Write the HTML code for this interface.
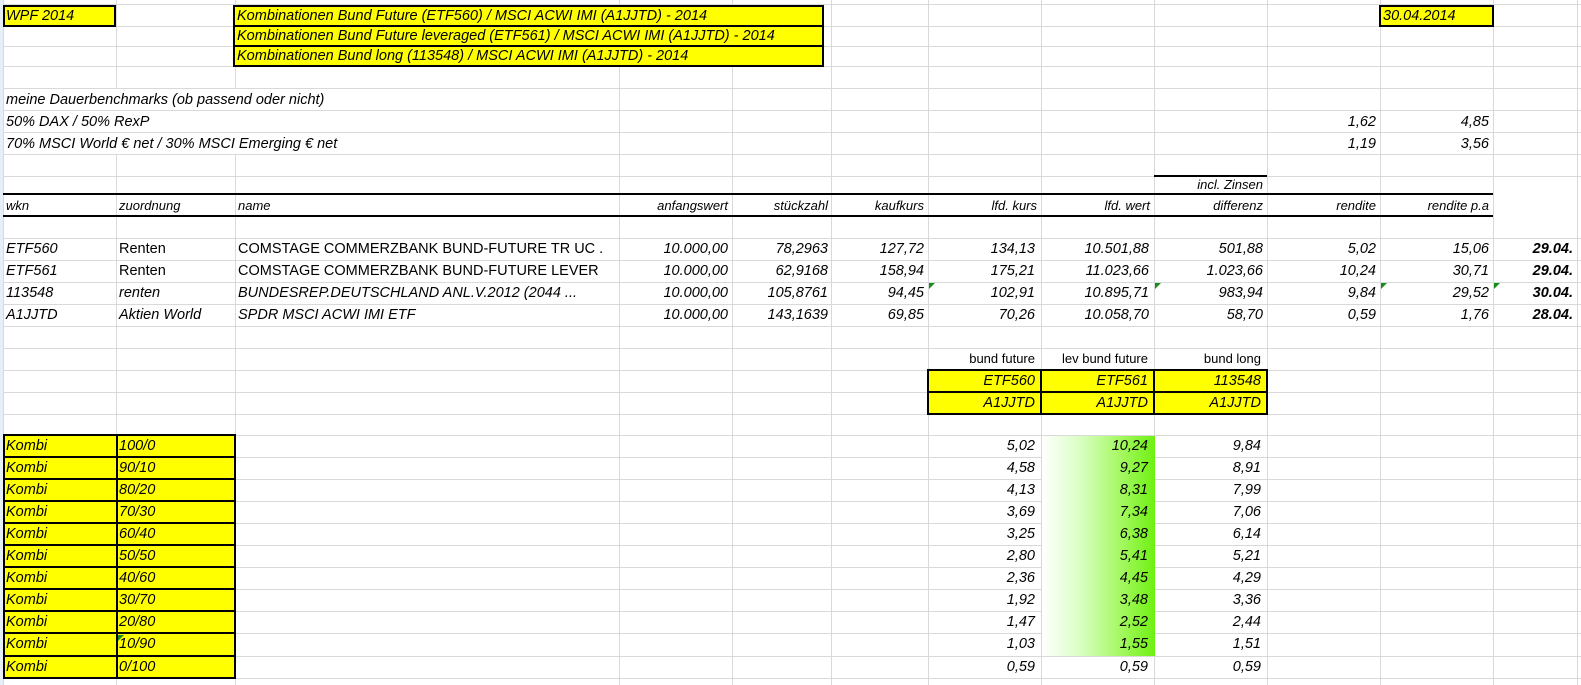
<!DOCTYPE html>
<html><head><meta charset="utf-8"><style>
body{margin:0;width:1581px;height:685px;background:#fff;position:relative;overflow:hidden;font-family:"Liberation Sans",Arial,sans-serif;}
.v{position:absolute;top:0;height:685px;width:1px;background:#d9d9d9}
.h{position:absolute;left:0;width:1581px;height:1px;background:#d9d9d9}
.t{position:absolute;font-size:14.5px;font-style:italic;white-space:nowrap;color:#000;line-height:22px;}
.r{text-align:right}
.y{position:absolute;background:#ffff00;border:2px solid #000;box-sizing:border-box;}
.k{position:absolute;height:2px;background:#000}
.s{font-size:13px}
.n{font-style:normal}
.b{font-weight:bold}
.tri{position:absolute;width:0;height:0;border-top:6px solid #1a8c1a;border-right:6px solid transparent}
</style></head><body>
<div class="h" style="top:4px"></div><div class="h" style="top:26px"></div><div class="h" style="top:46px"></div><div class="h" style="top:66px"></div><div class="h" style="top:88px"></div><div class="h" style="top:110px"></div><div class="h" style="top:132px"></div><div class="h" style="top:154px"></div><div class="h" style="top:176px"></div><div class="h" style="top:238px"></div><div class="h" style="top:260px"></div><div class="h" style="top:282px"></div><div class="h" style="top:304px"></div><div class="h" style="top:326px"></div><div class="h" style="top:348px"></div><div class="h" style="top:370px"></div><div class="h" style="top:392px"></div><div class="h" style="top:414px"></div><div class="h" style="top:435px"></div><div class="h" style="top:457px"></div><div class="h" style="top:479px"></div><div class="h" style="top:501px"></div><div class="h" style="top:523px"></div><div class="h" style="top:545px"></div><div class="h" style="top:567px"></div><div class="h" style="top:589px"></div><div class="h" style="top:611px"></div><div class="h" style="top:633px"></div><div class="h" style="top:656px"></div><div class="h" style="top:678px"></div>
<div class="v" style="left:3px"></div><div class="v" style="left:116px"></div><div class="v" style="left:235px"></div><div class="v" style="left:619px"></div><div class="v" style="left:732px"></div><div class="v" style="left:831px"></div><div class="v" style="left:928px"></div><div class="v" style="left:1041px"></div><div class="v" style="left:1154px"></div><div class="v" style="left:1267px"></div><div class="v" style="left:1380px"></div><div class="v" style="left:1493px"></div><div class="v" style="left:1577px"></div>
<div style="position:absolute;left:0;top:0;width:3px;height:685px;background:#e6eef8"></div>
<div style="position:absolute;left:4px;top:89px;width:614px;height:21px;background:#fff"></div>
<div style="position:absolute;left:4px;top:111px;width:614px;height:21px;background:#fff"></div>
<div style="position:absolute;left:4px;top:133px;width:614px;height:21px;background:#fff"></div>
<div style="position:absolute;left:1042px;top:436px;width:113px;height:220px;background:linear-gradient(to right,#fff 0%,#d8ffc0 35%,#a4f860 70%,#6ef012 100%)"></div>
<div class="k" style="left:1154px;top:175px;width:113px"></div>
<div class="k" style="left:3px;top:193px;width:1490px"></div>
<div class="k" style="left:3px;top:215px;width:1490px"></div>
<div class="y" style="left:3px;top:5px;width:113px;height:22px"></div>
<div class="y" style="left:233px;top:5px;width:591px;height:22px"></div>
<div class="y" style="left:233px;top:25px;width:591px;height:22px"></div>
<div class="y" style="left:233px;top:45px;width:591px;height:22px"></div>
<div class="y" style="left:1379px;top:5px;width:115px;height:22px"></div>
<div class="y" style="left:927px;top:369px;width:115px;height:24px"></div>
<div class="y" style="left:1040px;top:369px;width:115px;height:24px"></div>
<div class="y" style="left:1153px;top:369px;width:115px;height:24px"></div>
<div class="y" style="left:927px;top:391px;width:115px;height:24px"></div>
<div class="y" style="left:1040px;top:391px;width:115px;height:24px"></div>
<div class="y" style="left:1153px;top:391px;width:115px;height:24px"></div>
<div id="kb"></div>
<div class="t" style="left:6px;top:5px">WPF 2014</div>
<div class="t" style="left:237px;top:5px">Kombinationen Bund Future (ETF560) / MSCI ACWI IMI (A1JJTD) - 2014</div>
<div class="t" style="left:237px;top:25px">Kombinationen Bund Future leveraged (ETF561) / MSCI ACWI IMI (A1JJTD) - 2014</div>
<div class="t" style="left:237px;top:45px">Kombinationen Bund long (113548) / MSCI ACWI IMI (A1JJTD) - 2014</div>
<div class="t" style="left:1383px;top:5px">30.04.2014</div>
<div class="t" style="left:6px;top:89px">meine Dauerbenchmarks (ob passend oder nicht)</div>
<div class="t" style="left:6px;top:111px">50% DAX / 50% RexP</div>
<div class="t" style="left:6px;top:133px">70% MSCI World € net / 30% MSCI Emerging € net</div>
<div class="t r" style="left:1267px;width:109px;top:111px">1,62</div>
<div class="t r" style="left:1380px;width:109px;top:111px">4,85</div>
<div class="t r" style="left:1267px;width:109px;top:133px">1,19</div>
<div class="t r" style="left:1380px;width:109px;top:133px">3,56</div>
<div class="t r s" style="left:1154px;width:109px;top:176px;line-height:17px">incl. Zinsen</div>
<div class="t s" style="left:6px;top:195px">wkn</div>
<div class="t s" style="left:119px;top:195px">zuordnung</div>
<div class="t s" style="left:238px;top:195px">name</div>
<div class="t r s" style="left:619px;width:109px;top:195px">anfangswert</div>
<div class="t r s" style="left:732px;width:96px;top:195px">stückzahl</div>
<div class="t r s" style="left:831px;width:93px;top:195px">kaufkurs</div>
<div class="t r s" style="left:928px;width:109px;top:195px">lfd. kurs</div>
<div class="t r s" style="left:1041px;width:109px;top:195px">lfd. wert</div>
<div class="t r s" style="left:1154px;width:109px;top:195px">differenz</div>
<div class="t r s" style="left:1267px;width:109px;top:195px">rendite</div>
<div class="t r s" style="left:1380px;width:109px;top:195px">rendite p.a</div>
<div class="t" style="left:6px;top:238px">ETF560</div><div class="t n" style="left:119px;top:238px">Renten</div><div class="t n" style="left:238px;top:238px;width:380px;overflow:hidden">COMSTAGE COMMERZBANK BUND-FUTURE TR UC .</div>
<div class="t" style="left:6px;top:260px">ETF561</div><div class="t n" style="left:119px;top:260px">Renten</div><div class="t n" style="left:238px;top:260px;width:380px;overflow:hidden">COMSTAGE COMMERZBANK BUND-FUTURE LEVER</div>
<div class="t" style="left:6px;top:282px">113548</div><div class="t" style="left:119px;top:282px">renten</div><div class="t" style="left:238px;top:282px;width:380px;overflow:hidden">BUNDESREP.DEUTSCHLAND ANL.V.2012 (2044 ...</div>
<div class="t" style="left:6px;top:304px">A1JJTD</div><div class="t" style="left:119px;top:304px">Aktien World</div><div class="t" style="left:238px;top:304px">SPDR MSCI ACWI IMI ETF</div>
<div id="nums"></div>
<div class="tri" style="left:929px;top:283px"></div><div class="tri" style="left:1155px;top:283px"></div><div class="tri" style="left:1381px;top:283px"></div><div class="tri" style="left:1494px;top:283px"></div>
<div class="t r s n" style="left:928px;width:107px;top:348px">bund future</div>
<div class="t r s n" style="left:1041px;width:107px;top:348px">lev bund future</div>
<div class="t r s n" style="left:1154px;width:107px;top:348px">bund long</div>
<div class="t r" style="left:928px;width:107px;top:370px">ETF560</div>
<div class="t r" style="left:1041px;width:107px;top:370px">ETF561</div>
<div class="t r" style="left:1154px;width:107px;top:370px">113548</div>
<div class="t r" style="left:928px;width:107px;top:392px">A1JJTD</div>
<div class="t r" style="left:1041px;width:107px;top:392px">A1JJTD</div>
<div class="t r" style="left:1154px;width:107px;top:392px">A1JJTD</div>
<div id="kt"></div>
<script>
var rows=[[238,"10.000,00","78,2963","127,72","134,13","10.501,88","501,88","5,02","15,06","29.04."],
[260,"10.000,00","62,9168","158,94","175,21","11.023,66","1.023,66","10,24","30,71","29.04."],
[282,"10.000,00","105,8761","94,45","102,91","10.895,71","983,94","9,84","29,52","30.04."],
[304,"10.000,00","143,1639","69,85","70,26","10.058,70","58,70","0,59","1,76","28.04."]];
var cols=[[619,109],[732,96],[831,93],[928,107],[1041,108],[1154,109],[1267,109],[1380,109],[1493,80]];
var h="";
rows.forEach(function(r){for(var i=0;i<9;i++){h+='<div class="t r'+(i==8?' b':'')+'" style="left:'+cols[i][0]+'px;width:'+cols[i][1]+'px;top:'+r[0]+'px">'+r[i+1]+'</div>';}});
document.getElementById("nums").outerHTML=h;
var tops=[435,457,479,501,523,545,567,589,611,633,656,678];
var lab=["100/0","90/10","80/20","70/30","60/40","50/50","40/60","30/70","20/80","10/90","0/100"];
var a=["5,02","4,58","4,13","3,69","3,25","2,80","2,36","1,92","1,47","1,03","0,59"];
var b=["10,24","9,27","8,31","7,34","6,38","5,41","4,45","3,48","2,52","1,55","0,59"];
var c=["9,84","8,91","7,99","7,06","6,14","5,21","4,29","3,36","2,44","1,51","0,59"];
var k="",t="";
for(var i=0;i<11;i++){var y=tops[i],hh=tops[i+1]-y;
k+='<div class="y" style="left:3px;top:'+(y-1)+'px;width:115px;height:'+(hh+2)+'px"></div>';
k+='<div class="y" style="left:116px;top:'+(y-1)+'px;width:120px;height:'+(hh+2)+'px"></div>';
var ty=y;
t+='<div class="t" style="left:6px;top:'+ty+'px">Kombi</div>';
t+='<div class="t" style="left:119px;top:'+ty+'px">'+lab[i]+'</div>';
t+='<div class="t r" style="left:928px;width:107px;top:'+ty+'px">'+a[i]+'</div>';
t+='<div class="t r" style="left:1041px;width:107px;top:'+ty+'px">'+b[i]+'</div>';
t+='<div class="t r" style="left:1154px;width:107px;top:'+ty+'px">'+c[i]+'</div>';}
t+='<div class="tri" style="left:118px;top:635px"></div>';
document.getElementById("kb").outerHTML=k;
document.getElementById("kt").outerHTML=t;
</script>
</body></html>
